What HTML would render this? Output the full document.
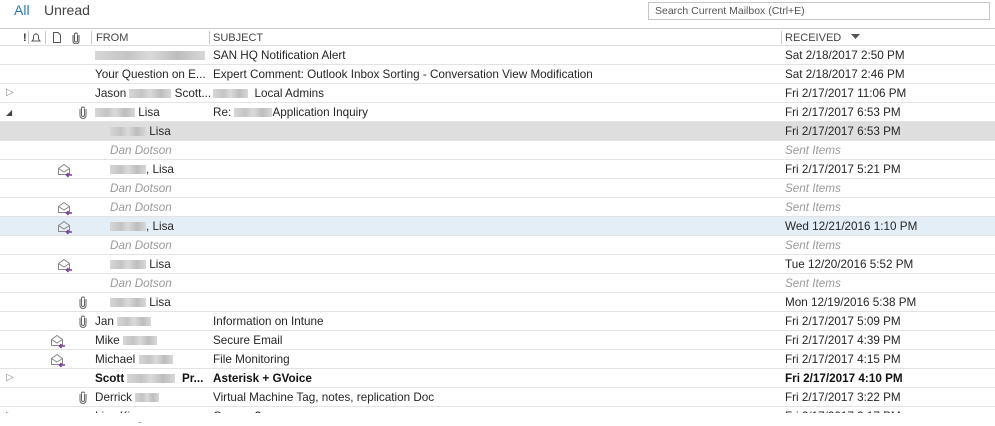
<!DOCTYPE html>
<html><head><meta charset="utf-8"><style>
*{margin:0;padding:0;box-sizing:border-box}
body{width:995px;height:422px;overflow:hidden;background:#fff;font-family:"Liberation Sans",sans-serif;font-size:11.7px;color:#262626;position:relative}
.t{position:absolute;white-space:nowrap}
.row{position:absolute;left:0;width:995px;height:19px;border-bottom:1px solid #e3e3e3}
.row span{position:absolute;top:3px;white-space:nowrap}
.b{display:inline-block;height:9px;background:linear-gradient(90deg,#d6d6d6,#c4c4c4 30%,#dadada 50%,#bdbdbd 75%,#d8d8d8);vertical-align:-1px}
.i{font-style:italic;color:#9a9a9a}
.bold{font-weight:bold;color:#111}
.hd{position:absolute;top:28px;height:18px;width:995px;border-top:1px solid #ccc;border-bottom:1px solid #ddd}
.hd span{position:absolute;top:3px;color:#444;font-size:11px}
.sep{position:absolute;top:2px;width:1px;height:13px;background:#c8c8c8}
</style></head><body>
<div class="t" style="left:14px;top:2px;font-size:14px;color:#2a7ab8">All</div>
<div class="t" style="left:44px;top:2px;font-size:14px;color:#444">Unread</div>
<div style="position:absolute;left:648px;top:2px;width:342px;height:18px;border:1px solid #c6c6c6"></div>
<div class="t" style="left:655px;top:5px;font-size:10.5px;color:#555">Search Current Mailbox (Ctrl+E)</div>
<div class="hd">
<span style="left:23px;font-weight:bold;color:#333">!</span><div class="sep" style="left:28px"></div>
<svg style="position:absolute;left:30px;top:3px" width="12" height="11"><path d="M2 9 L3.5 7 V4.5 A2.5 2.5 0 0 1 8.5 4.5 V7 L10 9 Z M6 1 V2" fill="none" stroke="#555" stroke-width="1"/></svg>
<div class="sep" style="left:45px"></div>
<svg style="position:absolute;left:52px;top:3px" width="10" height="11"><path d="M1.5 .5 H6 L8.5 3 V10.5 H1.5 Z" fill="none" stroke="#555"/></svg>
<svg style="position:absolute;left:72px;top:3px" width="8" height="12"><path d="M5.5 3 V8.5 A1.5 1.5 0 0 1 2.5 8.5 V2.5 A1.5 1.5 0 0 1 5.5 2.5" fill="none" stroke="#555"/><path d="M1 3 V9 A3 3 0 0 0 7 9 V3" fill="none" stroke="#555"/></svg>
<div class="sep" style="left:91px"></div><span style="left:96px">FROM</span>
<div class="sep" style="left:209px"></div><span style="left:213px">SUBJECT</span>
<div class="sep" style="left:781px"></div><span style="left:785px">RECEIVED</span>
<svg style="position:absolute;left:851px;top:5px" width="9" height="6"><path d="M0 0H9L4.5 5Z" fill="#555"/></svg>
</div>
<div class="row" style="top:46px"><span style="left:95px"><i class="b" style="width:110px"></i></span><span style="left:213px">SAN HQ Notification Alert</span><span style="left:785px">Sat 2/18/2017 2:50 PM</span></div>
<div class="row" style="top:65px"><span style="left:95px">Your Question on E...</span><span style="left:213px">Expert Comment: Outlook Inbox Sorting - Conversation View Modification</span><span style="left:785px">Sat 2/18/2017 2:46 PM</span></div>
<div class="row" style="top:84px"><span style="left:6px;color:#888;font-size:10px">▷</span><span style="left:95px">Jason <i class="b" style="width:42px"></i> Scott...</span><span style="left:213px"><i class="b" style="width:35px"></i> &nbsp;Local Admins</span><span style="left:785px">Fri 2/17/2017 11:06 PM</span></div>
<div class="row" style="top:103px"><span style="left:6px;color:#444;font-size:8px;top:5px">◢</span><span class="cl" style="left:79px"></span><span style="left:95px"><i class="b" style="width:40px"></i> Lisa</span><span style="left:213px">Re: <i class="b" style="width:38px"></i>Application Inquiry</span><span style="left:785px">Fri 2/17/2017 6:53 PM</span></div>
<div class="row" style="top:122px;background:#dedede"><span style="left:110px"><i class="b" style="width:36px"></i> Lisa</span><span style="left:785px">Fri 2/17/2017 6:53 PM</span></div>
<div class="row" style="top:141px"><span class="i" style="left:110px">Dan Dotson</span><span class="i" style="left:785px">Sent Items</span></div>
<div class="row" style="top:160px"><span class="ic" style="left:57px"></span><span style="left:110px"><i class="b" style="width:36px"></i>, Lisa</span><span style="left:785px">Fri 2/17/2017 5:21 PM</span></div>
<div class="row" style="top:179px"><span class="i" style="left:110px">Dan Dotson</span><span class="i" style="left:785px">Sent Items</span></div>
<div class="row" style="top:198px"><span class="ic" style="left:57px"></span><span class="i" style="left:110px">Dan Dotson</span><span class="i" style="left:785px">Sent Items</span></div>
<div class="row" style="top:217px;background:#e3eef7"><span class="ic" style="left:57px"></span><span style="left:110px"><i class="b" style="width:36px"></i>, Lisa</span><span style="left:785px">Wed 12/21/2016 1:10 PM</span></div>
<div class="row" style="top:236px"><span class="i" style="left:110px">Dan Dotson</span><span class="i" style="left:785px">Sent Items</span></div>
<div class="row" style="top:255px"><span class="ic" style="left:57px"></span><span style="left:110px"><i class="b" style="width:36px"></i> Lisa</span><span style="left:785px">Tue 12/20/2016 5:52 PM</span></div>
<div class="row" style="top:274px"><span class="i" style="left:110px">Dan Dotson</span><span class="i" style="left:785px">Sent Items</span></div>
<div class="row" style="top:293px"><span class="cl" style="left:79px"></span><span style="left:110px"><i class="b" style="width:36px"></i> Lisa</span><span style="left:785px">Mon 12/19/2016 5:38 PM</span></div>
<div class="row" style="top:312px"><span class="cl" style="left:79px"></span><span style="left:95px">Jan <i class="b" style="width:34px"></i></span><span style="left:213px">Information on Intune</span><span style="left:785px">Fri 2/17/2017 5:09 PM</span></div>
<div class="row" style="top:331px"><span class="ic" style="left:50px"></span><span style="left:95px">Mike <i class="b" style="width:34px"></i></span><span style="left:213px">Secure Email</span><span style="left:785px">Fri 2/17/2017 4:39 PM</span></div>
<div class="row" style="top:350px"><span class="ic" style="left:50px"></span><span style="left:95px">Michael <i class="b" style="width:34px"></i></span><span style="left:213px">File Monitoring</span><span style="left:785px">Fri 2/17/2017 4:15 PM</span></div>
<div class="row bold" style="top:369px"><span style="left:6px;color:#888;font-weight:normal;font-size:10px">▷</span><span style="left:95px">Scott <i class="b" style="width:48px"></i> &nbsp;Pr...</span><span style="left:213px">Asterisk + GVoice</span><span style="left:785px">Fri 2/17/2017 4:10 PM</span></div>
<div class="row" style="top:388px"><span class="cl" style="left:79px"></span><span style="left:95px">Derrick <i class="b" style="width:24px"></i></span><span style="left:213px">Virtual Machine Tag, notes, replication Doc</span><span style="left:785px">Fri 2/17/2017 3:22 PM</span></div>
<div class="row" style="top:407px;border:0"><span style="left:6px;color:#888;font-size:10px">▷</span><span style="left:95px">Lisa King</span><span style="left:213px">Camera?</span><span style="left:785px">Fri 2/17/2017 3:17 PM</span></div>
<div style="position:absolute;left:0;top:413px;width:995px;height:9px;background:#fff"></div>
<script>
document.querySelectorAll('.ic').forEach(function(e){e.style.top='2px';e.innerHTML='<svg width="16" height="16"><path d="M1.5 6.5 L7 2.5 L12.5 6.5 V12.5 H1.5 Z M1.5 6.5 L7 10 L12.5 6.5" fill="none" stroke="#888" stroke-width="1"/><path d="M15 13 H9.5 M11.5 11 L9.5 13 L11.5 15" fill="none" stroke="#7a3e9d" stroke-width="1.5"/></svg>';});
document.querySelectorAll('.cl').forEach(function(e){e.style.top='3px';e.innerHTML='<svg width="8" height="13"><path d="M5.5 3 V9 A1.5 1.5 0 0 1 2.5 9 V2.5 A1.5 1.5 0 0 1 5.5 2.5" fill="none" stroke="#666"/><path d="M1 3 V9.5 A3 3 0 0 0 7 9.5 V3" fill="none" stroke="#666"/></svg>';});
</script>
</body></html>
